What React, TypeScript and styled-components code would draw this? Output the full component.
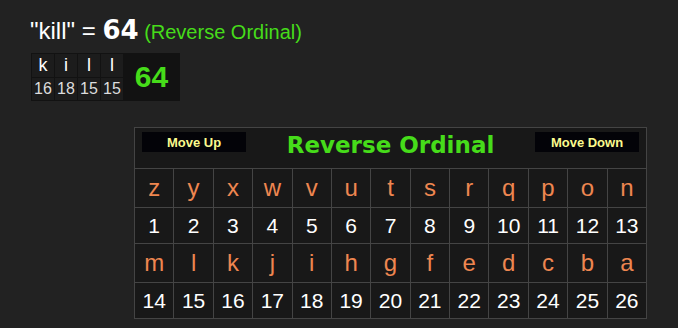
import React from "react";
import styled, { createGlobalStyle } from "styled-components";

const GlobalStyle = createGlobalStyle`
  html, body { margin: 0; padding: 0; }
  body {
    background: #222222;
    font-family: "Liberation Sans", Arial, sans-serif;
    color: #ffffff;
  }
`;

const Page = styled.div`
  width: 678px;
  height: 328px;
  padding: 15px 0 0 30px;
  box-sizing: border-box;
  overflow: hidden;
`;

const Heading = styled.h1`
  margin: 0;
  font-size: 24px;
  font-weight: normal;
  line-height: 30px;
  height: 30px;
  white-space: nowrap;
`;

const Total = styled.span`
  font-family: "DejaVu Sans", "Liberation Sans", sans-serif;
  font-weight: bold;
  font-size: 26px;
`;

const Cipher = styled.span`
  font-size: 20px;
  color: #46dc1a;
`;

const Breakdown = styled.div`
  display: inline-grid;
  grid-template-columns: repeat(4, 22px) 55px;
  grid-template-rows: 23px 22px;
  gap: 1px;
  padding: 1px;
  margin: 8px 0 0 1px;
  background: #121212;
`;

const BLetter = styled.div`
  background: #1c1c1c;
  color: #ffffff;
  font-size: 18px;
  line-height: 23px;
  text-align: center;
`;

const BValue = styled.div`
  background: #1c1c1c;
  color: #dddddd;
  font-size: 16px;
  line-height: 22px;
  text-align: center;
`;

const BTotal = styled.div`
  grid-column: 5;
  grid-row: 1 / 3;
  display: flex;
  align-items: center;
  justify-content: center;
  color: #46dc1a;
  font-weight: bold;
  font-size: 30px;
`;

const Board = styled.div`
  display: grid;
  grid-template-columns: repeat(13, 1fr);
  grid-template-rows: 40px 38px 35px 38px 35px;
  width: 513px;
  box-sizing: border-box;
  gap: 1px;
  padding: 1px;
  margin: 26px 0 0 104px;
  background: #444444;
`;

const HeaderCell = styled.div`
  grid-column: 1 / -1;
  box-sizing: border-box;
  background: #181818;
  display: flex;
  justify-content: space-between;
  align-items: flex-start;
  padding: 4px 7px 0;
`;

const MoveButton = styled.button`
  width: 104px;
  height: 20px;
  border: none;
  padding: 0;
  background: #030308;
  color: #fbfb8e;
  font-family: "Liberation Sans", Arial, sans-serif;
  font-weight: bold;
  font-size: 13px;
  cursor: pointer;
`;

const Title = styled.h2`
  margin: 2px 0 0;
  font-family: "DejaVu Sans", "Liberation Sans", sans-serif;
  font-weight: bold;
  font-size: 23px;
  line-height: 23px;
  color: #46dc1a;
`;

const Cell = styled.div<{ $letter?: boolean }>`
  background: #181818;
  display: flex;
  align-items: center;
  justify-content: center;
  color: ${(p) => (p.$letter ? "#ee8650" : "#ffffff")};
  font-size: ${(p) => (p.$letter ? "24px" : "21px")};
`;

const word = [
  { l: "k", v: 16 },
  { l: "i", v: 18 },
  { l: "l", v: 15 },
  { l: "l", v: 15 },
];

const alphabet = "zyxwvutsrqponmlkjihgfedcba".split("");

export default function App() {
  const rows = [alphabet.slice(0, 13), alphabet.slice(13)];
  return (
    <>
      <GlobalStyle />
      <Page>
        <Heading>
          "kill" = <Total>64</Total>
          <Cipher> (Reverse Ordinal)</Cipher>
        </Heading>
        <Breakdown>
          {word.map((w, i) => (
            <BLetter key={"l" + i}>{w.l}</BLetter>
          ))}
          <BTotal>64</BTotal>
          {word.map((w, i) => (
            <BValue key={"v" + i}>{w.v}</BValue>
          ))}
        </Breakdown>
        <Board>
          <HeaderCell>
            <MoveButton>Move Up</MoveButton>
            <Title>Reverse Ordinal</Title>
            <MoveButton>Move Down</MoveButton>
          </HeaderCell>
          {rows.map((row, r) => (
            <React.Fragment key={r}>
              {row.map((ch) => (
                <Cell $letter key={"a" + ch}>
                  {ch}
                </Cell>
              ))}
              {row.map((ch, i) => (
                <Cell key={"n" + ch}>{r * 13 + i + 1}</Cell>
              ))}
            </React.Fragment>
          ))}
        </Board>
      </Page>
    </>
  );
}
